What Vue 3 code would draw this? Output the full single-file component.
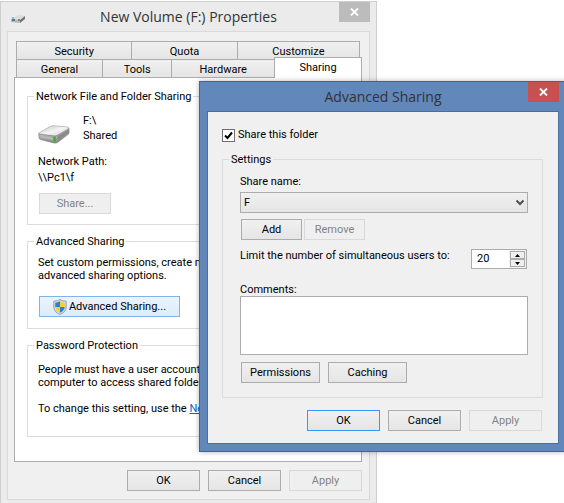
<script setup>
import { ref } from "vue";

const tabsTop = ["Security", "Quota", "Customize"];
const tabsBottom = ["General", "Tools", "Hardware", "Sharing"];
const activeTab = ref("Sharing");

const shareFolder = ref(true);
const shareName = ref("F");
const userLimit = ref(20);
const comments = ref("");

function changeLimit(step) {
  userLimit.value = Math.max(1, userLimit.value + step);
}
</script>

<template>
  <main class="desktop">
    <section class="window properties">
      <header class="title-bar">
        <svg class="title-icon" viewBox="0 0 16 11" aria-hidden="true">
          <path d="M1 6 8 2l7 1-5 4z" fill="#dcdcdc" />
          <path d="M1 6l9 1v3L1 9z" fill="#b4b8b8" />
          <path d="M10 7l5-4v3l-5 4z" fill="#707474" />
          <path d="M2 4h2v2H2z" fill="#9dbccb" />
          <path d="M2 6h3v2H2z" fill="#4f7f8c" />
          <path d="M8 6h2v2H8z" fill="#6a9c5e" />
        </svg>
        <h1>New Volume (F:) Properties</h1>
        <button class="close" aria-label="Close properties">
          <svg viewBox="0 0 9 8"><path d="M1 0.5l7 7M8 0.5l-7 7" /></svg>
        </button>
      </header>
      <div class="client">
        <nav class="tabs">
          <div class="tab-row">
            <button
              v-for="tab in tabsTop"
              :key="tab"
              class="tab"
              :class="[tab.toLowerCase(), { active: tab === activeTab }]"
              @click="activeTab = tab"
            >
              {{ tab }}
            </button>
          </div>
          <div class="tab-row second">
            <button
              v-for="tab in tabsBottom"
              :key="tab"
              class="tab"
              :class="[tab.toLowerCase(), { active: tab === activeTab }]"
              @click="activeTab = tab"
            >
              {{ tab }}
            </button>
          </div>
        </nav>
        <div class="panel">
          <fieldset class="network">
            <legend>Network File and Folder Sharing</legend>
            <div class="drive">
              <svg class="drive-icon" viewBox="0 0 32 19" aria-hidden="true">
                <defs>
                  <linearGradient id="top" x1="0" y1="0" x2="1" y2="1">
                    <stop offset="0" stop-color="#c4c4c4" />
                    <stop offset="0.5" stop-color="#f4f4f4" />
                    <stop offset="1" stop-color="#c8c8c8" />
                  </linearGradient>
                  <linearGradient id="front" x1="0" y1="0" x2="0" y2="1">
                    <stop offset="0" stop-color="#e2e2e2" />
                    <stop offset="1" stop-color="#858585" />
                  </linearGradient>
                </defs>
                <path d="M1 8 12 1.5Q14 .5 16 .7L30 2Q31.500 2.500 31 4L19 11.500 2 9.500z" fill="url(#top)" stroke="#a0a0a0" stroke-width="0.6" />
                <path d="M.7 8.500Q1 9 3 9.300l13 1.700q2 .2 3.500-.8L31 3.500V8q0 1-1 1.600L19.500 17.500q-1.500.8-3.500.5L2.500 14.500Q1 14 1 12.500z" fill="url(#front)" stroke="#777" stroke-width="0.6" />
                <path d="M19.500 11 31 4v4l-11.500 9z" fill="#8b8b8b" />
                <path d="M3 11l12 2v2L3 12.500z" fill="#b9b9b9" />
                <path d="M15.500 11.500h2.200v5h-2.200z" fill="#2fb51b" />
              </svg>
              <div class="drive-name">
                <div>F:\</div>
                <div>Shared</div>
              </div>
            </div>
            <div class="path">
              <div>Network Path:</div>
              <div>\\Pc1\f</div>
            </div>
            <button class="btn share" disabled>Share...</button>
          </fieldset>

          <fieldset class="advanced">
            <legend>Advanced Sharing</legend>
            <p>
              Set custom permissions, create multiple shares, and set other<br />
              advanced sharing options.
            </p>
            <button class="btn shield-btn">
              <svg class="shield" viewBox="0 0 14 16" aria-hidden="true">
                <path d="M7 .5Q4.500 2.200.8 2.200V8q0 5 6.200 7.500Q13.200 13 13.200 8V2.200Q9.500 2.200 7 .5z" fill="#d4dce4" stroke="#8292a2" stroke-width="0.8" />
                <path d="M7 2.300Q5 3.500 2.300 3.700V8H7z" fill="#2a7fd6" />
                <path d="M7 2.300Q9 3.500 11.700 3.700V8H7z" fill="#fbd02c" />
                <path d="M2.300 8q.2 3.700 4.700 5.800V8z" fill="#fbd02c" />
                <path d="M11.700 8q-.2 3.700-4.700 5.800V8z" fill="#2a7fd6" />
              </svg>
              <span>Advanced Sharing...</span>
            </button>
          </fieldset>

          <fieldset class="password">
            <legend>Password Protection</legend>
            <p>
              People must have a user account and password for this<br />
              computer to access shared folders.
            </p>
            <p>
              To change this setting, use the
              <a href="#network">Network Center</a>.
            </p>
          </fieldset>
        </div>
        <footer class="actions">
          <button class="btn">OK</button>
          <button class="btn">Cancel</button>
          <button class="btn" disabled>Apply</button>
        </footer>
      </div>
    </section>

    <section class="window dialog">
      <header class="title-bar">
        <h2>Advanced Sharing</h2>
        <button class="close" aria-label="Close advanced sharing">
          <svg viewBox="0 0 9 8"><path d="M1 0.5l7 7M8 0.5l-7 7" /></svg>
        </button>
      </header>
      <div class="client">
        <label class="check">
          <span class="check-box">
            <input v-model="shareFolder" type="checkbox" />
            <svg v-if="shareFolder" viewBox="0 0 13 13" aria-hidden="true">
              <path d="M3 6.500 5.500 9 10 3.500" />
            </svg>
          </span>
          Share this folder
        </label>
        <fieldset class="settings">
          <legend>Settings</legend>
          <label for="share-name">Share name:</label>
          <div class="select-box">
            <select id="share-name" v-model="shareName">
              <option>F</option>
            </select>
            <svg viewBox="0 0 8 7" aria-hidden="true">
              <path d="M0.500 1.500 4 5l3.500-3.500" />
            </svg>
          </div>
          <div class="name-buttons">
            <button class="btn">Add</button>
            <button class="btn" disabled>Remove</button>
          </div>
          <div class="limit">
            <label for="limit">Limit the number of simultaneous users to:</label>
            <div class="spinner">
              <input id="limit" v-model.number="userLimit" type="text" />
              <div class="steps">
                <button aria-label="Increase" @click="changeLimit(1)">
                  <svg viewBox="0 0 5 3"><path d="M0 3h5L2.500 0z" /></svg>
                </button>
                <button aria-label="Decrease" @click="changeLimit(-1)">
                  <svg viewBox="0 0 5 3"><path d="M0 0h5L2.500 3z" /></svg>
                </button>
              </div>
            </div>
          </div>
          <label for="comments">Comments:</label>
          <textarea id="comments" v-model="comments"></textarea>
          <div class="more-buttons">
            <button class="btn">Permissions</button>
            <button class="btn">Caching</button>
          </div>
        </fieldset>
        <footer class="actions">
          <button class="btn default">OK</button>
          <button class="btn">Cancel</button>
          <button class="btn" disabled>Apply</button>
        </footer>
      </div>
    </section>
  </main>
</template>

<style>
body {
  margin: 0;
  background: #fff;
}
</style>

<style scoped>
* {
  box-sizing: border-box;
}
.desktop {
  position: relative;
  height: 100vh;
  overflow: hidden;
  color: #000;
}
.window {
  position: absolute;
}
.properties {
  top: 1px;
  left: 0;
  right: 187px;
  padding: 0 6px 6px;
  border: 1px solid #cfcfcf;
  background: #ebebeb;
  font: 11px/15px Roboto, Arial, sans-serif;
}
.dialog {
  top: 81px;
  left: 199px;
  right: -2px;
  padding: 0 6px 7px 7px;
  border: 1px solid #43658f;
  background: #6187bb;
  box-shadow: 0 0 5px rgba(0, 0, 0, 0.3);
  font: 11px/14px Roboto, Tahoma, sans-serif;
}
.title-bar {
  position: relative;
  height: 29px;
}
h1,
h2 {
  margin: 0;
  font: 14px/30px "Open Sans", "Segoe UI", sans-serif;
  text-align: center;
  color: #333;
}
.title-icon {
  position: absolute;
  top: 11px;
  left: 3px;
  width: 16px;
  height: 11px;
}
.close {
  position: absolute;
  top: 0;
  right: 0;
  display: flex;
  align-items: center;
  justify-content: center;
  width: 31px;
  height: 20px;
  padding: 0;
  border: 0;
  background: #bcbcbc;
}
.dialog .close {
  background: #c75050;
}
.close svg {
  width: 9px;
  height: 8px;
}
.close path {
  stroke: #fff;
  stroke-width: 1.8;
}
.client {
  background: #f0f0f0;
  border: 1px solid #d9d9d9;
}
.properties .client {
  padding: 9px 7px 8px 6px;
}
.dialog .client {
  padding: 16px 15px 12px 14px;
  border-color: #4a6e9d;
}
.tabs {
  padding: 0 2px;
}
.tab-row {
  display: flex;
  height: 18px;
}
.tab {
  flex: 106 1 0;
  padding: 1px 0 0;
  border: 1px solid #acacac;
  border-bottom: 0;
  background: linear-gradient(#f0f0f0, #e5e5e5);
  color: #000;
  font: inherit;
}
.tab + .tab {
  margin-left: -1px;
}
.security {
  flex-grow: 116;
}
.customize {
  flex-grow: 123;
}
.second {
  margin-right: -2px;
}
.general {
  flex-grow: 87;
}
.tools {
  flex-grow: 70;
}
.hardware {
  flex-grow: 104;
}
.sharing {
  flex-grow: 88;
}
.tab.active {
  position: relative;
  height: 21px;
  margin-top: -2px;
  padding: 0 0 2px;
  background: #fff;
}
.panel {
  display: flex;
  flex-direction: column;
  gap: 9px;
  padding: 11px 12px 24px;
  border: 1px solid #acacac;
  background: #fff;
}
fieldset {
  min-width: 0;
  margin: 0;
  border: 1px solid #dcdcdc;
}
.panel fieldset {
  padding: 0 10px 12px;
}
legend {
  margin-left: -4px;
  padding: 0 2px;
  line-height: 15px;
}
.drive {
  display: flex;
  gap: 13px;
  padding-top: 9px;
}
.drive-icon {
  width: 32px;
  height: 19px;
  margin-top: 12px;
}
.path {
  display: grid;
  gap: 1px;
  padding: 10px 0 8px;
}
.btn {
  height: 21px;
  padding: 0;
  border: 1px solid #acacac;
  background: linear-gradient(#f0f0f0, #e5e5e5);
  color: #000;
  font: inherit;
}
.btn:disabled {
  border-color: #d9d9d9;
  background: #efefef;
  color: #838383;
}
.share {
  width: 72px;
  margin-left: 1px;
}
.network {
  height: 136px;
}
.advanced {
  height: 95px;
}
.password {
  height: 99px;
}
p {
  margin: 0;
  line-height: 13px;
}
.panel p {
  padding-top: 7px;
  white-space: nowrap;
}
.shield-btn {
  display: flex;
  align-items: center;
  justify-content: center;
  gap: 2px;
  width: 141px;
  margin: 14px 0 0 1px;
  border-color: #7eb4ea;
  background: linear-gradient(#ebf4fc, #dcecfc);
}
.shield {
  width: 14px;
  height: 16px;
}
.panel .password p {
  padding-top: 10px;
}
.panel .password p + p {
  padding-top: 13px;
}
a {
  color: #0066cc;
}
.actions {
  display: flex;
  justify-content: flex-end;
  gap: 8px;
  padding-top: 8px;
}
.actions .btn {
  width: 73px;
}
.check {
  display: flex;
  align-items: center;
  gap: 3px;
}
.check-box {
  position: relative;
  width: 13px;
  height: 13px;
}
.check-box input {
  display: block;
  appearance: none;
  width: 13px;
  height: 13px;
  margin: 0;
  border: 1px solid #707070;
  background: #fff;
}
.check-box svg {
  position: absolute;
  top: 0;
  left: 0;
  width: 13px;
  height: 13px;
  pointer-events: none;
}
.check-box path {
  fill: none;
  stroke: #000;
  stroke-width: 2;
}
.settings {
  margin-top: 10px;
  padding: 8px 14px 14px 17px;
}
.settings legend {
  margin-left: -11px;
}
.settings label {
  display: block;
  line-height: 13px;
}
.select-box {
  position: relative;
  margin-top: 4px;
}
select {
  display: block;
  appearance: none;
  width: 100%;
  height: 21px;
  padding: 0 3px;
  border: 1px solid #acacac;
  border-radius: 0;
  background: linear-gradient(#f0f0f0, #e5e5e5);
  color: #000;
  font: inherit;
}
.select-box svg {
  position: absolute;
  top: 7px;
  right: 4px;
  width: 8px;
  height: 7px;
  pointer-events: none;
}
.select-box path {
  fill: none;
  stroke: #505050;
  stroke-width: 2;
}
.name-buttons {
  display: flex;
  gap: 2px;
  padding: 6px 0 0 1px;
}
.name-buttons .btn {
  width: 61px;
}
.limit {
  display: flex;
  align-items: flex-start;
  justify-content: space-between;
  padding: 9px 1px 14px 0;
}
.spinner {
  display: flex;
  width: 56px;
  height: 20px;
  border: 1px solid #acacac;
  background: #fff;
}
.spinner input {
  flex: 1;
  min-width: 0;
  padding: 0 5px;
  border: 0;
  background: transparent;
  font: inherit;
}
.steps {
  display: flex;
  flex-direction: column;
  width: 17px;
  padding: 1px;
  background: #f0f0f0;
}
.steps button {
  display: flex;
  flex: 1;
  align-items: center;
  justify-content: center;
  padding: 0;
  border: 1px solid #acacac;
  background: #efefef;
}
.steps svg {
  width: 5px;
  height: 3px;
}
textarea {
  display: block;
  width: 100%;
  height: 59px;
  padding: 2px;
  border: 1px solid #acacac;
  background: #fff;
  font: inherit;
  resize: none;
}
.more-buttons {
  display: flex;
  gap: 8px;
  padding: 7px 0 0 1px;
}
.more-buttons .btn {
  width: 79px;
}
.dialog .actions {
  padding: 12px 1px 0 0;
}
.btn.default {
  border-color: #3399ff;
}
</style>
